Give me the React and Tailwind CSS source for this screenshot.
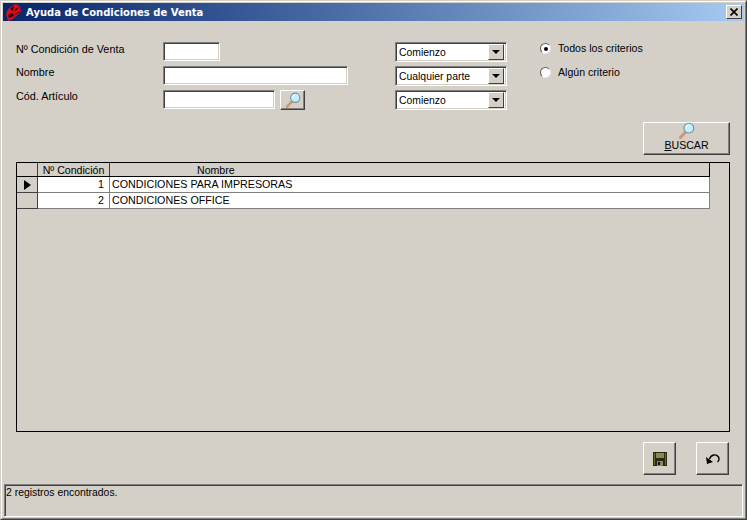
const font = { fontFamily: '"Liberation Sans", Arial, sans-serif' }

const sunken = 'border border-t-[#808080] border-l-[#808080] border-r-white border-b-white shadow-[inset_1px_1px_0_#404040,inset_-1px_-1px_0_#d4d0c8]'
const raised = 'border border-t-white border-l-white border-r-[#404040] border-b-[#404040] shadow-[inset_-1px_-1px_0_#808080] bg-[#d4d0c8] flex flex-col items-center justify-center'

function Magnifier({ size = 18 }) {
  return (
    <svg width={size} height={size} viewBox="0 0 18 18" className="shrink-0">
      <path d="M2.5 16.5 L8.5 10" stroke="#d0956a" strokeWidth="3" strokeLinecap="round" />
      <circle cx="11.5" cy="6.5" r="5.2" fill="#c4eef8" stroke="#6f93a8" strokeWidth="1.2" />
      <path d="M8.5 6 A3 3 0 0 1 11 3.5" stroke="#ffffff" strokeWidth="1.2" fill="none" />
    </svg>
  )
}

function Combo({ value }) {
  return (
    <div className={`w-[112px] h-[20px] bg-white flex items-center justify-between p-[2px] ${sunken}`}>
      <span className="pl-[1px] pt-[1px] text-[10.4px] text-black">{value}</span>
      <div className="w-[16px] h-[16px] border border-t-white border-l-white border-r-[#404040] border-b-[#404040] bg-[#d4d0c8] flex items-center justify-center">
        <div className="w-0 h-0 border-l-[4px] border-r-[4px] border-t-[4px] border-l-transparent border-r-transparent border-t-black" />
      </div>
    </div>
  )
}

function Radio({ checked, label }) {
  return (
    <div className="h-[24px] flex items-start gap-[7px]">
      <div className="mt-[1px] w-[11px] h-[11px] rounded-full bg-white border border-t-[#606060] border-l-[#606060] border-r-[#e8e8e8] border-b-[#e8e8e8] flex items-center justify-center">
        {checked && <div className="w-[4px] h-[4px] rounded-full bg-black" />}
      </div>
      <span className="text-[10.6px] leading-[12px] text-black">{label}</span>
    </div>
  )
}

function GridRow({ num, name, current }) {
  return (
    <div className="flex h-[16px]">
      <div className="w-[21px] border-r border-b border-r-[#404040] border-b-[#404040] bg-[#d4d0c8] flex items-center justify-center">
        {current && <div className="w-0 h-0 border-t-[5px] border-b-[5px] border-l-[7px] border-t-transparent border-b-transparent border-l-black" />}
      </div>
      <div className="w-[72px] bg-white border-r border-b border-[#808080] pr-[5px] text-right text-[10.7px] leading-[15px] text-black">{num}</div>
      <div className="w-[600px] bg-white border-r border-b border-[#808080] pl-[2px] text-[10.7px] leading-[15px] text-black">{name}</div>
    </div>
  )
}

export default function App() {
  return (
    <div className="w-[747px] h-[520px] overflow-hidden border border-t-[#d4d0c8] border-l-[#d4d0c8] border-r-[#404040] border-b-[#404040] bg-[#d4d0c8]" style={font}>
      <div className="h-full border border-t-white border-l-white border-r-[#808080] border-b-[#808080] p-[1px] flex flex-col">
        {/* Title bar */}
        <div className="h-[18px] shrink-0 flex items-center pl-[2px] pr-[2px] bg-gradient-to-r from-[#0a246a] to-[#a6caf0]">
          <svg width="17" height="17" viewBox="0 0 17 17" className="shrink-0">
            <path d="M1 10 L3 5 L6 3 L10 0 L13 1 L15 3 L16 8 L10 13 L8 15 L3 17 Z" fill="#d80f1a" />
            <path d="M5 5 L9 2 L8 7 Z M10 5 L14 3 L10 8 Z" fill="#2a0606" />
            <path d="M3 11 L8 9 L9 12 L4 14 Z" fill="#2a0606" />
            <path d="M10 10 L15 7 L15 8 L10 11 Z" fill="#2a0606" />
          </svg>
          <span className="ml-[4px] pt-[1px] text-[10px] font-bold text-white" style={{ fontFamily: '"DejaVu Sans", sans-serif' }}>Ayuda de Condiciones de Venta</span>
          <div className="ml-auto w-[16px] h-[14px] border border-t-white border-l-white border-r-[#404040] border-b-[#404040] bg-[#d4d0c8] flex items-center justify-center">
            <svg width="8" height="8" viewBox="0 0 8 8"><path d="M0.5 0.5 L7.5 7.5 M7.5 0.5 L0.5 7.5" stroke="#000" strokeWidth="1.6" /></svg>
          </div>
        </div>

        {/* Search form */}
        <div className="flex pt-[21px] pl-[13px] shrink-0 text-black">
          <div className="w-[147px] text-[10.8px] leading-[14px]">
            <div className="h-[24px]">Nº Condición de Venta</div>
            <div className="h-[24px] -mt-[1px]">Nombre</div>
            <div className="h-[24px]">Cód. Artículo</div>
          </div>
          <div className="w-[232px]">
            <div className="h-[24px]"><div className={`w-[57px] h-[19px] bg-white ${sunken}`} /></div>
            <div className="h-[24px]"><div className={`w-[185px] h-[19px] bg-white ${sunken}`} /></div>
            <div className="h-[24px] flex gap-[5px]">
              <div className={`w-[112px] h-[19px] bg-white ${sunken}`} />
              <div className={`w-[25px] h-[20px] ${raised}`}><Magnifier size={16} /></div>
            </div>
          </div>
          <div className="w-[145px] flex flex-col gap-[4px]">
            <Combo value="Comienzo" />
            <Combo value="Cualquier parte" />
            <Combo value="Comienzo" />
          </div>
          <div>
            <Radio checked label="Todos los criterios" />
            <Radio label="Algún criterio" />
          </div>
        </div>

        {/* Buscar */}
        <div className="flex justify-end pr-[14px] mt-[8px] shrink-0">
          <div className={`w-[87px] h-[33px] pb-[3px] ${raised}`}>
            <Magnifier size={17} />
            <span className="text-[10.6px] leading-[13px] text-black"><u>B</u>USCAR</span>
          </div>
        </div>

        {/* Results grid */}
        <div className="ml-[13px] mr-[14px] mt-[7px] h-[270px] shrink-0 border border-black bg-[#d4d0c8]">
          <div className="flex h-[14px] w-[693px] border-b border-black text-[10.6px] leading-[15px] text-black">
            <div className="w-[21px] border-r border-[#404040]" />
            <div className="w-[72px] border-r border-[#404040] text-center">Nº Condición</div>
            <div className="w-[600px] border-r border-black pl-[87px]">Nombre</div>
          </div>
          <GridRow num="1" name="CONDICIONES PARA IMPRESORAS" current />
          <GridRow num="2" name="CONDICIONES OFFICE" />
        </div>

        {/* Action buttons */}
        <div className="flex justify-end gap-[20px] pr-[15px] mt-[10px] shrink-0">
          <div className={`w-[33px] h-[33px] ${raised}`}>
            <svg width="16" height="16" viewBox="0 0 16 16">
              <path d="M1 1 H15 V15 H1 Z" fill="#2a2a14" />
              <path d="M4 2 H12 V7 H4 Z" fill="#8a8a4e" />
              <path d="M2 2 H3 V14 H2 Z M13 2 H14 V14 H13 Z" fill="#6e6e38" />
              <path d="M5 10 H11 V15 H5 Z" fill="#8a8a4e" />
              <path d="M6 11 H8 V14 H6 Z" fill="#111" />
            </svg>
          </div>
          <div className={`w-[33px] h-[33px] ${raised}`}>
            <svg width="16" height="13" viewBox="0 0 16 13">
              <path d="M4.5 7 C6 2.5 11 1.5 13.5 5 C14.5 6.5 14 9 12.5 10" stroke="#000" strokeWidth="1.4" fill="none" />
              <path d="M1 5 L2 12 L8 10 Z" fill="#000" />
            </svg>
          </div>
        </div>

        {/* Status bar */}
        <div className="mt-[9px] mx-[1px] flex-1 border border-t-[#808080] border-l-[#808080] border-r-white border-b-white shadow-[inset_1px_1px_0_#404040] pl-[1px] pt-[2px] text-[10.4px] leading-[12px] text-black">
          2 registros encontrados.
        </div>
      </div>
    </div>
  )
}
